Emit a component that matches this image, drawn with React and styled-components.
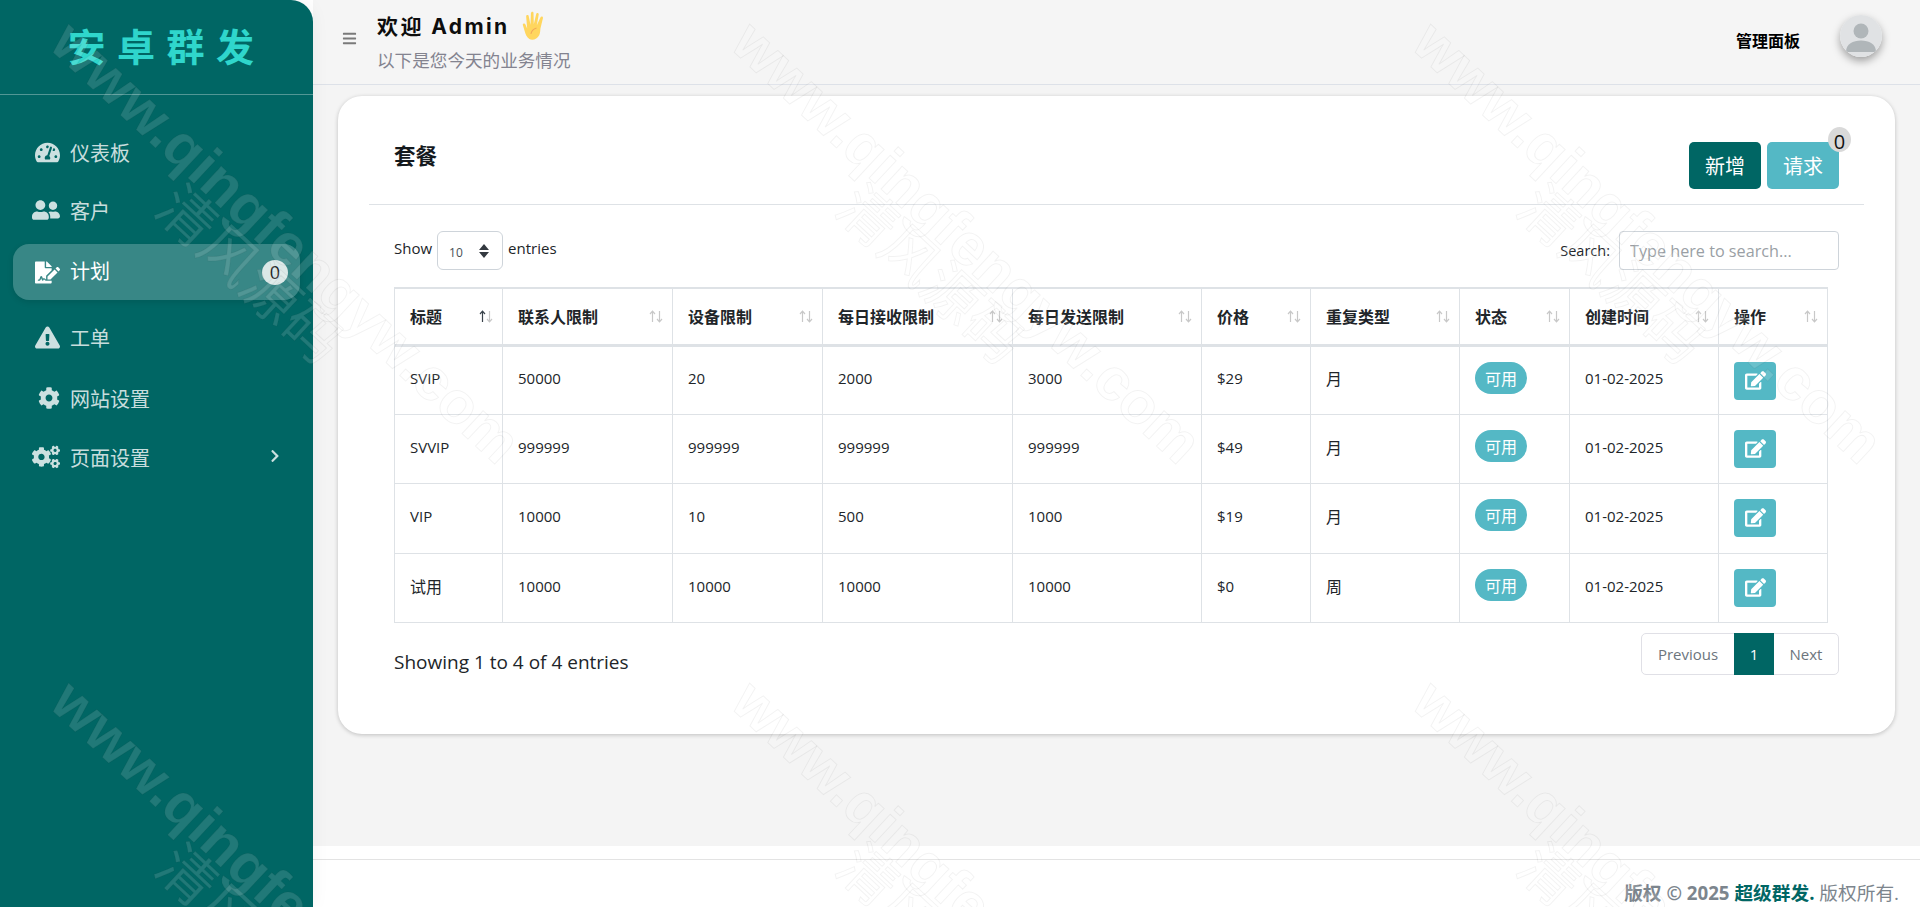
import React from 'react';
import styled, { createGlobalStyle } from 'styled-components';
import {
  FaTachometerAlt, FaUserFriends, FaFileSignature, FaExclamationTriangle,
  FaCog, FaCogs, FaChevronRight, FaBars, FaEdit,
} from 'react-icons/fa';

const TEAL = '#006664';
const CYAN = '#54b8c5';
const LINE = '#dee2e6';
const SANS = '"Open Sans", "Noto Sans CJK SC", sans-serif';

const GlobalStyle = createGlobalStyle`
  * { box-sizing: border-box; }
  html, body { margin: 0; padding: 0; height: 100%; overflow: hidden; }
  body { font-family: ${SANS}; font-size: 15px; color: #212529; background: #fff; }
`;

const Page = styled.div`
  display: flex;
  width: 100%;
  height: 907px;
  position: relative;
  overflow: hidden;
`;

const Sidebar = styled.aside`
  width: 313px;
  flex-shrink: 0;
  background: ${TEAL};
  border-top-right-radius: 22px;
  box-shadow: 0 0 18px rgba(0, 0, 0, 0.05);
  z-index: 1;
`;

const Logo = styled.div`
  height: 95px;
  padding: 0 0 5px 20px;
  display: flex;
  align-items: center;
  justify-content: center;
  border-bottom: 1px solid rgba(255, 255, 255, 0.32);
  color: #2fd6cc;
  font-family: "Noto Sans CJK SC", sans-serif;
  font-size: 38px;
  font-weight: 700;
  letter-spacing: 11.5px;
`;

const Nav = styled.nav`
  display: flex;
  flex-direction: column;
  padding-top: 29px;
`;

const NavItem = styled.a`
  display: flex;
  align-items: center;
  height: 56px;
  margin: ${p => (p.$active ? '2px 13px 11px' : '0 13px 3px')};
  padding: 0 12px 0 19px;
  border-radius: 16px;
  gap: 10px;
  font-family: "Noto Sans CJK SC", sans-serif;
  font-size: 20px;
  color: ${p => (p.$active ? '#fff' : 'rgba(255, 255, 255, 0.8)')};
  background: ${p => (p.$active ? 'rgba(255, 255, 255, 0.22)' : 'transparent')};
  box-shadow: ${p => (p.$active ? '0 2px 6px rgba(0, 0, 0, 0.12)' : 'none')};
  &:nth-child(2) { margin: -1px 13px 4px; }
  &:nth-child(4) { margin: -2px 13px 5px; }
`;

const NavIcon = styled.span`
  width: 28px;
  display: flex;
  justify-content: flex-end;
  color: ${p => (p.$active ? '#fff' : 'rgba(255, 255, 255, 0.8)')};
`;

const NavLabel = styled.span`
  flex: 1;
  margin-top: ${p => (p.$active ? '-3px' : '0')};
`;

const NavBadge = styled.span`
  width: 26px;
  height: 25px;
  border-radius: 50%;
  background: #dbe8e7;
  color: #222;
  display: flex;
  align-items: center;
  justify-content: center;
  font-family: ${SANS};
  font-size: 18px;
`;

const NavArrow = styled.span`
  display: flex;
  margin: -3px 6px 0 0;
`;

const Main = styled.div`
  flex: 1;
  min-width: 0;
  display: flex;
  flex-direction: column;
  background: #f4f4f4;
`;

const Header = styled.header`
  height: 85px;
  flex-shrink: 0;
  display: flex;
  align-items: center;
  padding: 0 38px 0 29px;
  border-bottom: 1px solid #dde1e8;
  background: #f5f5f5;
`;

const Burger = styled.span`
  color: #7a7a7a;
  display: flex;
  font-size: 15px;
  margin-right: 20px;
  margin-top: -8px;
`;

const Greeting = styled.div`
  flex: 1;
  align-self: flex-start;
  padding-top: 10px;
`;

const Hello = styled.div`
  display: flex;
  align-items: center;
  height: 30px;
  font-family: Inter, "Noto Sans CJK SC", sans-serif;
  font-size: 21px;
  font-weight: 700;
  letter-spacing: 2.4px;
  color: #0d0d0d;
`;

const Hand = styled.svg`
  margin-left: 11px;
`;

const Sub = styled.div`
  margin-top: 8px;
  font-family: "Noto Sans CJK SC", sans-serif;
  font-size: 17.6px;
  line-height: 24px;
  color: #83838f;
`;

const PanelLink = styled.div`
  margin-right: 40px;
  font-family: "Noto Sans CJK SC", sans-serif;
  font-size: 16px;
  font-weight: 700;
  color: #000;
  margin-top: -5px;
`;

const Avatar = styled.svg`
  border-radius: 50%;
  box-shadow: 0 4px 8px rgba(0, 0, 0, 0.35);
  margin-top: -13px;
`;

const Content = styled.main`
  flex: 1;
  padding: 11px 25px 0;
`;

const Card = styled.section`
  height: 638px;
  background: #fff;
  border-radius: 24px;
  box-shadow: 0 1px 4px rgba(0, 0, 0, 0.22);
`;

const CardHead = styled.div`
  height: 109px;
  margin: 0 31px;
  padding: 0 25px 15px;
  display: flex;
  justify-content: space-between;
  align-items: flex-end;
  border-bottom: 1px solid ${LINE};
`;

const CardTitle = styled.h2`
  align-self: flex-start;
  margin: 43px 0 0;
  font-family: "Noto Sans CJK SC", sans-serif;
  font-size: 21.5px;
  line-height: 32px;
  font-weight: 700;
  color: #14191d;
`;

const Actions = styled.div`
  display: flex;
  gap: 6px;
`;

const ActionBtn = styled.button`
  position: relative;
  width: 72px;
  height: 47px;
  border: 0;
  border-radius: 5px;
  padding: 0;
  background: ${p => p.$bg};
  color: #fff;
  font-family: "Noto Sans CJK SC", sans-serif;
  font-size: 20px;
`;

const BtnBadge = styled.span`
  position: absolute;
  top: -15px;
  right: -12px;
  width: 23px;
  height: 25px;
  border-radius: 50%;
  background: #d9d9d9;
  color: #111;
  font-family: ${SANS};
  font-size: 20px;
  line-height: 30px;
  text-align: center;
`;

const CardBody = styled.div`
  padding: 26px 56px 0;
`;

const Controls = styled.div`
  display: flex;
  justify-content: space-between;
  height: 39px;
  margin-bottom: 17px;
`;

const LengthLabel = styled.label`
  display: flex;
  align-items: flex-start;
  gap: 5px;
  line-height: 34px;
`;

const LengthSelect = styled.select`
  appearance: none;
  width: 66px;
  height: 39px;
  padding: 3px 0 0 11px;
  border: 1px solid #ced4da;
  border-radius: 6px;
  color: #495057;
  font-family: ${SANS};
  font-size: 12px;
  background: #fff url("data:image/svg+xml,%3Csvg xmlns='http://www.w3.org/2000/svg' width='10' height='14' viewBox='0 0 10 14'%3E%3Cpath fill='%23343a40' d='M5 0l5 6H0zM5 14L0 8h10z'/%3E%3C/svg%3E") no-repeat right 13px center;
`;

const SearchLabel = styled.label`
  display: flex;
  align-items: center;
  gap: 9px;
  font-size: 14.5px;
`;

const SearchInput = styled.input`
  width: 220px;
  height: 39px;
  padding: 0 10px;
  border: 1px solid #ced4da;
  border-radius: 4px;
  font-family: ${SANS};
  font-size: 16.2px;
  &::placeholder { color: #9a9fa5; opacity: 1; }
`;

const Table = styled.table`
  width: 1433px;
  table-layout: fixed;
  border-collapse: collapse;
  border-top: 2px solid ${LINE};
  tbody tr:nth-child(3) td { height: 70px; }
`;

const Th = styled.th`
  height: 57px;
  padding: 0 9px 0 15px;
  border: 1px solid ${LINE};
  border-top: 0;
  border-bottom: 3px solid ${LINE};
  font-family: "Noto Sans CJK SC", sans-serif;
  font-size: 16px;
  font-weight: 700;
  text-align: left;
  color: #212529;
`;

const ThInner = styled.div`
  display: flex;
  justify-content: space-between;
  align-items: center;
`;

const Td = styled.td`
  height: 69px;
  padding: ${p => (p.$top ? '15px 15px 0' : '0 15px 4px')};
  border: 1px solid ${LINE};
  vertical-align: ${p => (p.$top ? 'top' : 'middle')};
  font-size: ${p => (p.$cjk ? '16px' : '15px')};
  color: #212529;
`;

const StatusPill = styled.span`
  display: inline-flex;
  align-items: center;
  justify-content: center;
  width: 52px;
  height: 32px;
  border-radius: 16px;
  background: ${CYAN};
  color: #fff;
  font-size: 16px;
`;

const EditBtn = styled.button`
  display: flex;
  align-items: center;
  justify-content: center;
  width: 42px;
  height: 38px;
  border: 0;
  border-radius: 4px;
  padding: 0;
  background: ${CYAN};
  color: #fff;
  font-size: 21px;
`;

const TableFoot = styled.div`
  display: flex;
  justify-content: space-between;
  align-items: flex-start;
  margin-top: 10px;
`;

const Info = styled.div`
  font-size: 19px;
  line-height: 42px;
  padding-top: 8px;
`;

const Pager = styled.div`
  display: flex;
  height: 42px;
  border: 1px solid #e0e0e6;
  border-radius: 5px;
  font-size: 15px;
  color: #6c757d;
`;

const PageLink = styled.span`
  width: ${p => p.$w}px;
  display: flex;
  align-items: center;
  justify-content: center;
  margin: ${p => (p.$active ? '-1px 0' : '0')};
  background: ${p => (p.$active ? TEAL : 'transparent')};
  color: ${p => (p.$active ? '#fff' : 'inherit')};
`;

const Footer = styled.footer`
  height: 61px;
  flex-shrink: 0;
  padding: 13px 0 0;
  background: #fff;
`;

const FooterText = styled.div`
  border-top: 1px solid #e3e3e3;
  padding: 21px 21px 0 0;
  text-align: right;
  font-family: ${SANS};
  font-size: 18.7px;
  line-height: 24px;
  color: #7c858d;
  white-space: nowrap;
`;

const Strong = styled.b`
  color: ${p => p.$color || 'inherit'};
  font-weight: 700;
`;

const WatermarkLayer = styled.div`
  position: absolute;
  inset: 0;
  overflow: hidden;
  pointer-events: none;
  z-index: 5;
`;

const Mark = styled.div`
  position: absolute;
  left: ${p => p.$x}px;
  top: ${p => p.$y}px;
  transform-origin: 0 0;
  transform: rotate(43deg);
  white-space: nowrap;
  font-family: "Liberation Sans", "Noto Sans CJK SC", sans-serif;
  font-weight: 700;
  color: rgba(255, 255, 255, 0.13);
  -webkit-text-stroke: 1px rgba(0, 0, 0, 0.05);
`;

const MarkUrl = styled.div`
  font-size: 59px;
  line-height: 64px;
`;

const MarkName = styled.div`
  font-size: 57px;
  line-height: 70px;
  font-weight: 400;
  margin: -18px 0 0 189px;
`;

const Sort = ({ on }) => (
  <svg width="14" height="13" viewBox="0 0 14 13" fill="none" strokeWidth="1.2">
    <path d="M3.5 12V1.5M1 4l2.5-2.8L6 4" stroke={on ? '#39424a' : '#c8c8c8'} />
    <path d="M10.5 1v10.5M8 9l2.5 2.8L13 9" stroke="#c8c8c8" />
  </svg>
);

const HandEmoji = () => (
  <Hand width="25" height="29" viewBox="0 0 22 28">
    <path
      fill="#ffd65e"
      d="M7 27c-2.5-1.5-3.6-4.5-4.4-7.2L.7 13.6c-.4-1.4 1.8-2.2 2.4-.8l1.8 4.2L3.9 5.4c-.2-1.6 2.2-2 2.5-.4l1.7 8.2.4-11C8.6.2 11 .2 11 1.9l.3 10.9L13.6 2.9c.4-1.6 2.7-1 2.4.6l-1.8 10.2 3.6-7.6c.7-1.4 2.8-.5 2.3 1L17.7 17c-.3 1.7 0 4-1.2 6.4-1.6 3.6-6.5 5.4-9.5 3.6z"
    />
    <path fill="none" stroke="#f2a65a" strokeWidth="1" d="M8.5 22c.6-2.6 2.6-4.8 5.4-5.6" />
  </Hand>
);

const columns = [
  ['标题', 108], ['联系人限制', 170], ['设备限制', 150], ['每日接收限制', 190], ['每日发送限制', 189],
  ['价格', 109], ['重复类型', 149], ['状态', 110], ['创建时间', 149], ['操作', 109],
];

const plans = [
  ['SVIP', '50000', '20', '2000', '3000', '$29', '月'],
  ['SVVIP', '999999', '999999', '999999', '999999', '$49', '月'],
  ['VIP', '10000', '10', '500', '1000', '$19', '月'],
  ['试用', '10000', '10000', '10000', '10000', '$0', '周'],
];

const menu = [
  { label: '仪表板', icon: <FaTachometerAlt size={25} /> },
  { label: '客户', icon: <FaUserFriends size={28} /> },
  { label: '计划', icon: <FaFileSignature size={25} />, active: true, badge: 0 },
  { label: '工单', icon: <FaExclamationTriangle size={25} /> },
  { label: '网站设置', icon: <FaCog size={22} /> },
  { label: '页面设置', icon: <FaCogs size={28} />, more: true },
];

const marks = [83, 764, 1445].flatMap(x => [[x, 9], [x, 668]]);

export default function App() {
  return (
    <Page>
      <GlobalStyle />
      <Sidebar>
        <Logo>安卓群发</Logo>
        <Nav>
          {menu.map(m => (
            <NavItem key={m.label} $active={m.active}>
              <NavIcon $active={m.active}>{m.icon}</NavIcon>
              <NavLabel $active={m.active}>{m.label}</NavLabel>
              {m.badge !== undefined && <NavBadge>{m.badge}</NavBadge>}
              {m.more && <NavArrow><FaChevronRight size={14} /></NavArrow>}
            </NavItem>
          ))}
        </Nav>
      </Sidebar>
      <Main>
        <Header>
          <Burger><FaBars /></Burger>
          <Greeting>
            <Hello>欢迎 Admin <HandEmoji /></Hello>
            <Sub>以下是您今天的业务情况</Sub>
          </Greeting>
          <PanelLink>管理面板</PanelLink>
          <Avatar width="42" height="42" viewBox="0 0 42 42">
            <rect width="42" height="42" fill="#e0e2e4" />
            <circle cx="21" cy="16" r="7.5" fill="#b0b6b9" />
            <path d="M6 37c0-8 7-11.5 15-11.5S36 29 36 37z" fill="#b0b6b9" />
          </Avatar>
        </Header>
        <Content>
          <Card>
            <CardHead>
              <CardTitle>套餐</CardTitle>
              <Actions>
                <ActionBtn $bg={TEAL}>新增</ActionBtn>
                <ActionBtn $bg={CYAN}>请求<BtnBadge>0</BtnBadge></ActionBtn>
              </Actions>
            </CardHead>
            <CardBody>
              <Controls>
                <LengthLabel>
                  Show
                  <LengthSelect defaultValue="10"><option>10</option></LengthSelect>
                  entries
                </LengthLabel>
                <SearchLabel>
                  Search:
                  <SearchInput placeholder="Type here to search..." />
                </SearchLabel>
              </Controls>
              <Table>
                <colgroup>
                  {columns.map(([name, w]) => <col key={name} width={w} />)}
                </colgroup>
                <thead>
                  <tr>
                    {columns.map(([name], i) => (
                      <Th key={name}><ThInner>{name}<Sort on={i === 0} /></ThInner></Th>
                    ))}
                  </tr>
                </thead>
                <tbody>
                  {plans.map(row => (
                    <tr key={row[0]}>
                      {row.map((v, i) => <Td key={i} $cjk={/[^\x00-\x7f]/.test(v)}>{v}</Td>)}
                      <Td $top><StatusPill>可用</StatusPill></Td>
                      <Td>01-02-2025</Td>
                      <Td $top><EditBtn><FaEdit /></EditBtn></Td>
                    </tr>
                  ))}
                </tbody>
              </Table>
              <TableFoot>
                <Info>Showing 1 to 4 of 4 entries</Info>
                <Pager>
                  <PageLink $w={92}>Previous</PageLink>
                  <PageLink $w={40} $active>1</PageLink>
                  <PageLink $w={64}>Next</PageLink>
                </Pager>
              </TableFoot>
            </CardBody>
          </Card>
        </Content>
        <Footer>
          <FooterText>
            <Strong>版权 © 2025 </Strong><Strong $color={TEAL}>超级群发.</Strong> 版权所有.
          </FooterText>
        </Footer>
      </Main>
      <WatermarkLayer>
        {marks.map(([x, y]) => (
          <Mark key={`${x}-${y}`} $x={x} $y={y}>
            <MarkUrl>www.qingfengyw.com</MarkUrl>
            <MarkName>清风源码</MarkName>
          </Mark>
        ))}
      </WatermarkLayer>
    </Page>
  );
}
